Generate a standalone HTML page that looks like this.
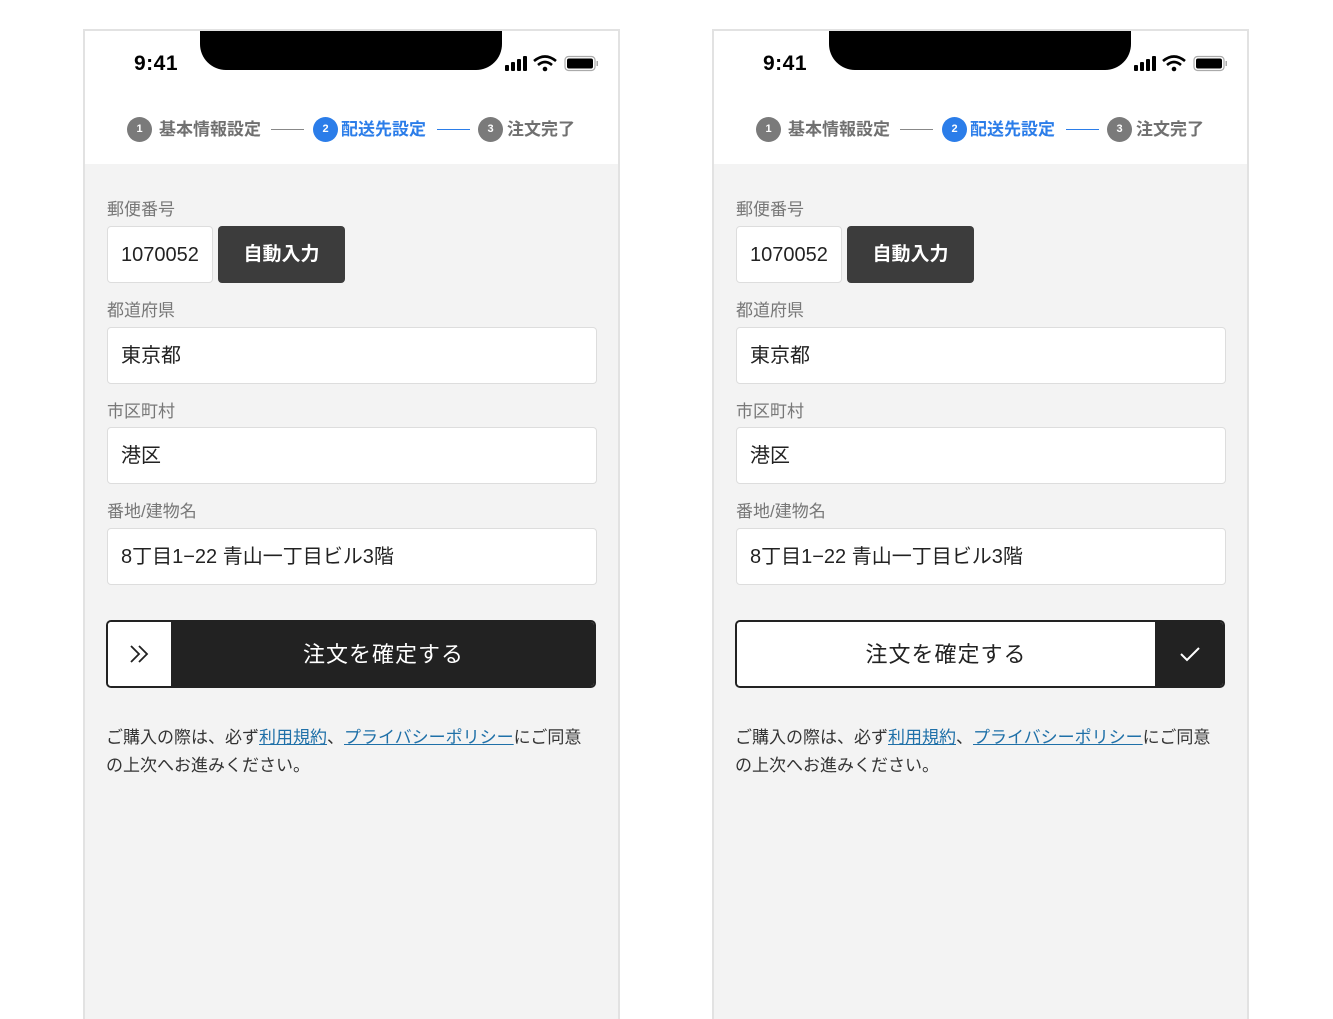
<!DOCTYPE html>
<html><head><meta charset="utf-8"><style>
*{margin:0;padding:0;box-sizing:border-box}
html,body{height:1000px}
body{width:1333px;background:#fff;position:relative;overflow:hidden;font-family:"Liberation Sans","Noto Sans CJK JP",sans-serif}
.ph{position:absolute;top:29px;width:537px;height:990px;border:2px solid #e2e2e2;border-bottom:none;background:#f3f3f3;overflow:hidden}
.ph>*{position:absolute}
.hd{left:0;top:0;width:533px;height:133px;background:#fff}
.notch{left:115px;top:-1px;width:302px;height:40px;background:#000;border-radius:0 0 26px 26px}
.time{left:49px;top:21px;font-size:21px;font-weight:bold;color:#000;letter-spacing:.5px}
.c{width:25px;height:25px;border-radius:50%;background:#7a7a7a;color:#fff;font-size:11px;font-weight:bold;text-align:center;line-height:25px;top:86px}
.st{top:86px;font-size:17px;font-weight:bold;color:#707070;line-height:26px}
.ln{top:98px;width:33px;height:1px;background:#888}
.lb{font-size:17px;color:#777;line-height:20px}
.in{background:#fff;border:1px solid #ddd;border-radius:4px;height:57px;font-size:20px;color:#222;line-height:57px;padding-left:13px}
.ab{background:#3c3c3c;border-radius:4px;color:#fff;font-size:19px;font-weight:bold;text-align:center;line-height:58px;height:57px}
.btn{left:21px;top:589px;width:490px;height:68px;border:2px solid #222;border-radius:5px;overflow:hidden;display:flex}
.tx{left:21px;top:693px;width:492px;font-size:17px;line-height:28px;color:#333}
.tx a{color:#1f70a8;text-decoration:underline}
</style></head><body>

<div class="ph" style="left:83px">
<div class="hd"></div>
<div class="notch"></div>
<div class="time">9:41</div>
<svg style="left:418px;top:22px" width="100" height="22" viewBox="0 0 100 22">
<rect x="2" y="12" width="4" height="6" rx="1" fill="#000"/><rect x="8" y="9" width="4" height="9" rx="1" fill="#000"/><rect x="14" y="6" width="4" height="12" rx="1" fill="#000"/><rect x="20" y="3" width="4" height="15" rx="1" fill="#000"/>
<path d="M31 8 Q42 -1 53 8" stroke="#000" stroke-width="2.6" fill="none"/><path d="M35 12 Q42 6 49 12" stroke="#000" stroke-width="2.6" fill="none"/><circle cx="42" cy="16" r="2.3" fill="#000"/>
<rect x="62" y="3.5" width="30" height="14" rx="3.5" stroke="#aaa" stroke-width="1.2" fill="none"/><rect x="64" y="5.5" width="26" height="10" rx="2" fill="#000"/><rect x="93.5" y="8" width="1.5" height="5" fill="#aaa"/>
</svg>
<div class="c" style="left:42px">1</div><div class="st" style="left:74px">基本情報設定</div>
<div class="ln" style="left:186px"></div>
<div class="c" style="left:228px;background:#2b7de9">2</div><div class="st" style="left:256px;color:#2b7de9">配送先設定</div>
<div class="ln" style="left:352px;background:#2b7de9"></div>
<div class="c" style="left:393px">3</div><div class="st" style="left:422px">注文完了</div>
<div class="lb" style="left:22px;top:169px">郵便番号</div>
<div class="in" style="left:22px;top:195px;width:106px">1070052</div>
<div class="ab" style="left:133px;top:195px;width:127px">自動入力</div>
<div class="lb" style="left:22px;top:270px">都道府県</div>
<div class="in" style="left:22px;top:296px;width:490px">東京都</div>
<div class="lb" style="left:22px;top:371px">市区町村</div>
<div class="in" style="left:22px;top:396px;width:490px">港区</div>
<div class="lb" style="left:22px;top:471px">番地/建物名</div>
<div class="in" style="left:22px;top:497px;width:490px">8丁目1−22 青山一丁目ビル3階</div>
<div class="btn"><div style="width:65px;background:#fff;border-right:2px solid #222;display:flex;align-items:center;justify-content:center"><svg width="24" height="20" viewBox="0 0 24 20"><path d="M3 2 L11 10 L3 18 M11 2 L19 10 L11 18" stroke="#222" stroke-width="1.8" fill="none"/></svg></div><div style="flex:1;background:#222;color:#fff;font-size:22px;text-align:center;line-height:66px;letter-spacing:1px">注文を確定する</div></div>
<div class="tx">ご購入の際は、必ず<a>利用規約</a>、<a>プライバシーポリシー</a>にご同意の上次へお進みください。</div>
</div>

<div class="ph" style="left:712px">
<div class="hd"></div>
<div class="notch"></div>
<div class="time">9:41</div>
<svg style="left:418px;top:22px" width="100" height="22" viewBox="0 0 100 22">
<rect x="2" y="12" width="4" height="6" rx="1" fill="#000"/><rect x="8" y="9" width="4" height="9" rx="1" fill="#000"/><rect x="14" y="6" width="4" height="12" rx="1" fill="#000"/><rect x="20" y="3" width="4" height="15" rx="1" fill="#000"/>
<path d="M31 8 Q42 -1 53 8" stroke="#000" stroke-width="2.6" fill="none"/><path d="M35 12 Q42 6 49 12" stroke="#000" stroke-width="2.6" fill="none"/><circle cx="42" cy="16" r="2.3" fill="#000"/>
<rect x="62" y="3.5" width="30" height="14" rx="3.5" stroke="#aaa" stroke-width="1.2" fill="none"/><rect x="64" y="5.5" width="26" height="10" rx="2" fill="#000"/><rect x="93.5" y="8" width="1.5" height="5" fill="#aaa"/>
</svg>
<div class="c" style="left:42px">1</div><div class="st" style="left:74px">基本情報設定</div>
<div class="ln" style="left:186px"></div>
<div class="c" style="left:228px;background:#2b7de9">2</div><div class="st" style="left:256px;color:#2b7de9">配送先設定</div>
<div class="ln" style="left:352px;background:#2b7de9"></div>
<div class="c" style="left:393px">3</div><div class="st" style="left:422px">注文完了</div>
<div class="lb" style="left:22px;top:169px">郵便番号</div>
<div class="in" style="left:22px;top:195px;width:106px">1070052</div>
<div class="ab" style="left:133px;top:195px;width:127px">自動入力</div>
<div class="lb" style="left:22px;top:270px">都道府県</div>
<div class="in" style="left:22px;top:296px;width:490px">東京都</div>
<div class="lb" style="left:22px;top:371px">市区町村</div>
<div class="in" style="left:22px;top:396px;width:490px">港区</div>
<div class="lb" style="left:22px;top:471px">番地/建物名</div>
<div class="in" style="left:22px;top:497px;width:490px">8丁目1−22 青山一丁目ビル3階</div>
<div class="btn"><div style="flex:1;background:#fff;color:#222;font-size:22px;text-align:center;line-height:66px;letter-spacing:1px;border-right:2px solid #222">注文を確定する</div><div style="width:66px;background:#222;display:flex;align-items:center;justify-content:center"><svg width="24" height="20" viewBox="0 0 24 20"><path d="M3 10 L9 16 L21 4" stroke="#fff" stroke-width="2" fill="none"/></svg></div></div>
<div class="tx">ご購入の際は、必ず<a>利用規約</a>、<a>プライバシーポリシー</a>にご同意の上次へお進みください。</div>
</div>

</body></html>
